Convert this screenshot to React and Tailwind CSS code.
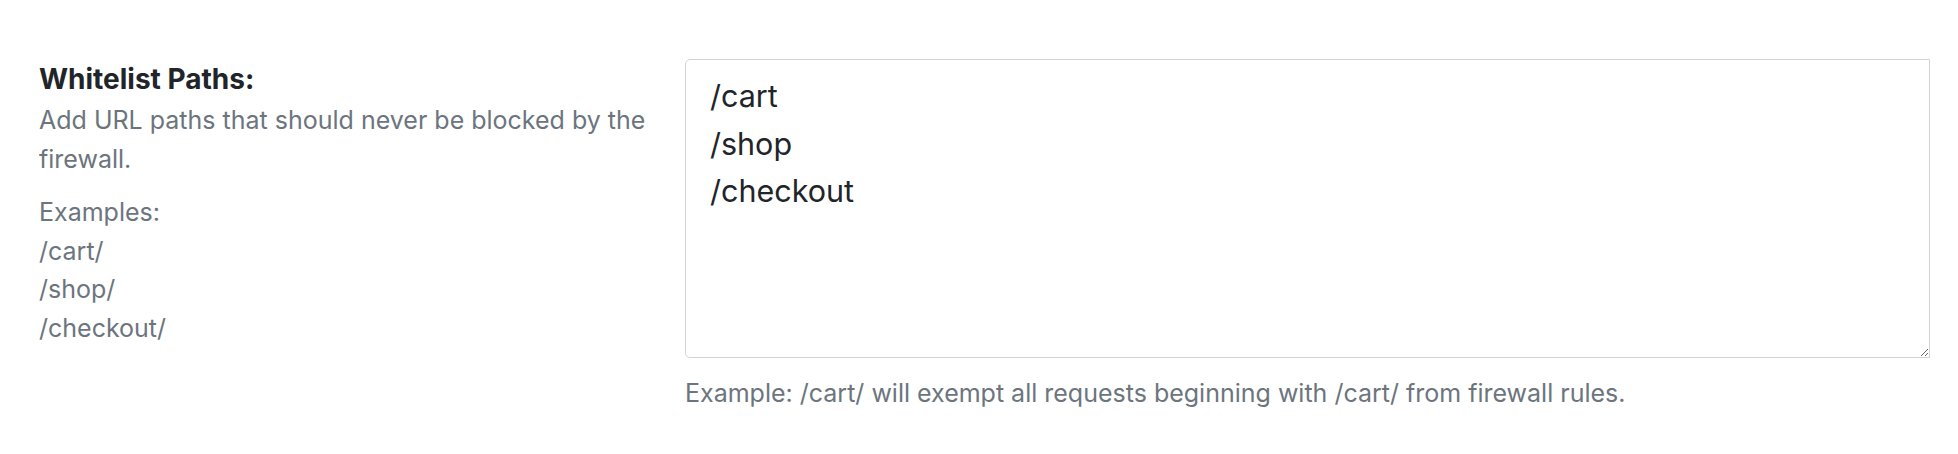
import React from "react";

export default function App() {
  const font = { fontFamily: "Inter, 'Liberation Sans', sans-serif" };
  return (
    <div className="w-[1958px] h-[454px] bg-white" style={font}>
      <div className="flex items-start pt-[59px] pl-[39px] pr-[28px]">
        <div className="w-[622px] shrink-0 pt-[1px]">
          <div className="text-[28px] leading-[38px] font-bold text-[#212529]">Whitelist Paths:</div>
          <p className="mt-[3px] text-[25px] leading-[38.7px] text-[#6c757d]">
            Add URL paths that should never be blocked by the firewall.
          </p>
          <div className="mt-[14.5px] text-[25px] leading-[38.7px] text-[#6c757d]">
            <div>Examples:</div>
            <div>/cart/</div>
            <div>/shop/</div>
            <div>/checkout/</div>
          </div>
        </div>
        <div className="ml-[24px] flex-1">
          <textarea
            className="block w-full h-[299px] border border-[#ced4da] rounded-l-[5px] rounded-r-none pl-[24px] pr-[24px] pt-[12px] text-[30.5px] leading-[47.5px] text-[#212529] outline-none"
            style={font}
            defaultValue={"/cart\n/shop\n/checkout"}
          />
          <div className="mt-[15.5px] text-[25px] leading-[38.7px] text-[#6c757d]">
            Example: /cart/ will exempt all requests beginning with /cart/ from firewall rules.
          </div>
        </div>
      </div>
    </div>
  );
}
